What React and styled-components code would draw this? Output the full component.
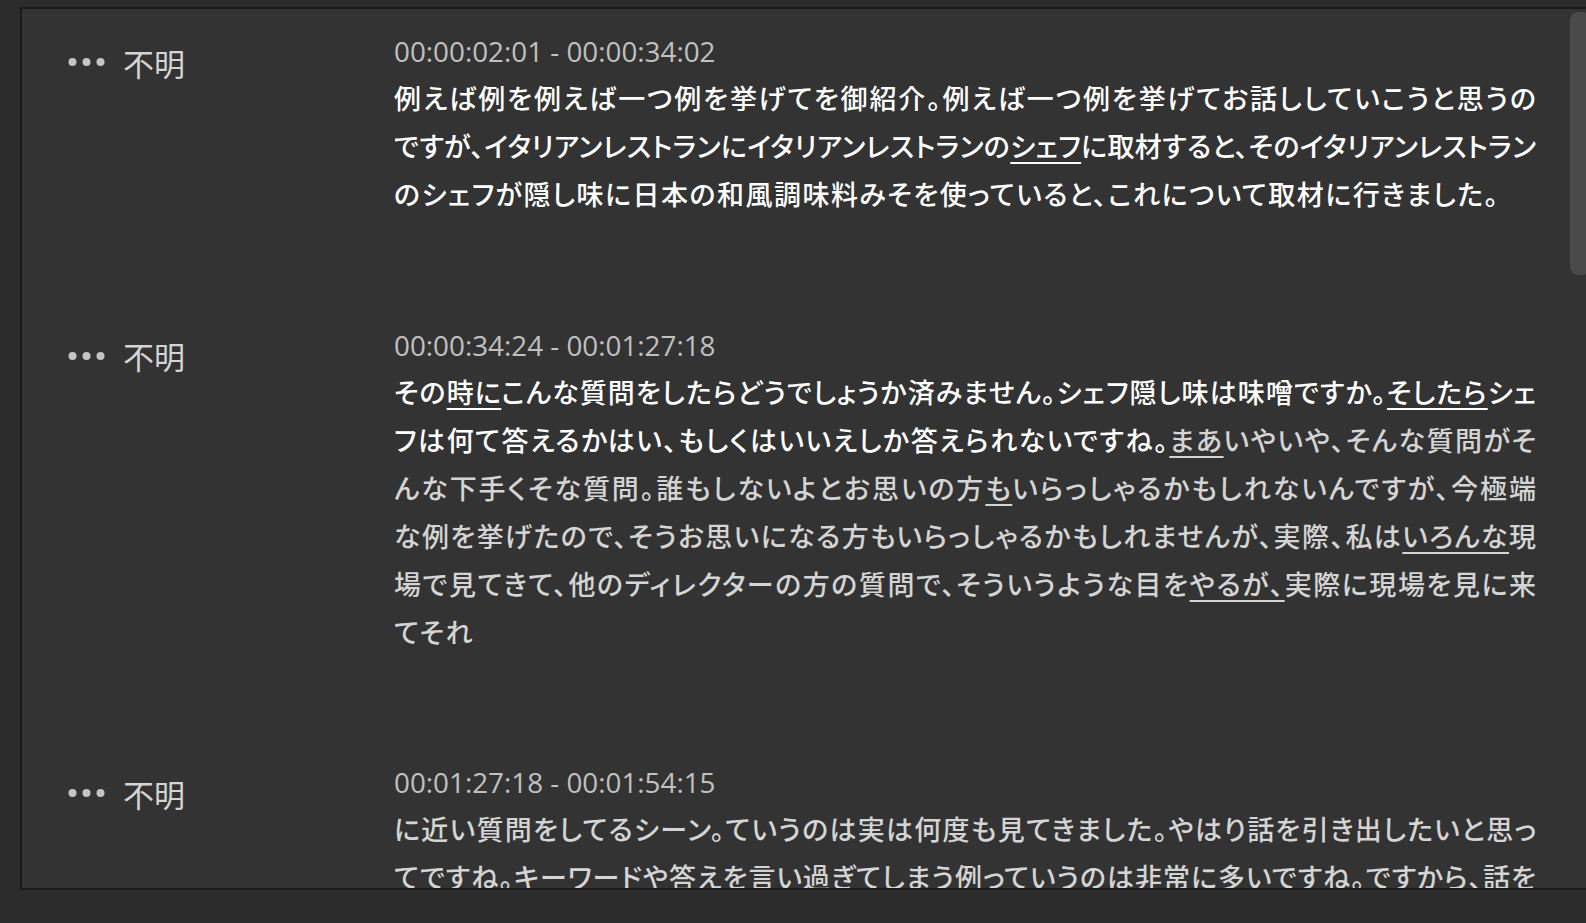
import React from "react";
import styled, { createGlobalStyle } from "styled-components";

const Global = createGlobalStyle`
  html, body { margin: 0; padding: 0; background: #2c2c2c; overflow: hidden; }
  #root { height: 923px; }
`;

const Page = styled.div`
  height: 923px;
  box-sizing: border-box;
  padding: 7px 0 33px 20px;
  background: #2c2c2c;
`;

const Panel = styled.div`
  position: relative;
  height: 100%;
  box-sizing: border-box;
  background: #333333;
  border: 2px solid #1a1a1a;
  border-right: none;
  overflow: hidden;
`;

const Thumb = styled.div`
  position: absolute;
  top: 3px;
  right: -4px;
  width: 20px;
  height: 263px;
  border-radius: 8px;
  background: #4a4a4a;
`;

const List = styled.div`
  display: flex;
  flex-direction: column;
`;

const Row = styled.div`
  display: grid;
  grid-template-columns: 372px 1142px;
  padding: 20px 0 84.5px;
`;

const Speaker = styled.div`
  display: flex;
  align-items: center;
  gap: 17px;
  padding-left: 46px;
  margin-top: 13px;
  height: 40px;
  color: #d4d4d4;
  font-family: "Noto Sans CJK JP", "Noto Sans", sans-serif;
  font-size: 31px;
`;

const Dots = styled.svg`
  width: 38px;
  height: 10px;
  flex: none;
`;

const Content = styled.div`
  display: flex;
  flex-direction: column;
`;

const Time = styled.div`
  font-family: "Open Sans", "Noto Sans", sans-serif;
  font-size: 27.8px;
  line-height: 45px;
  color: #c0c0c0;
`;

const Line = styled.div`
  font-family: "Noto Sans CJK JP", sans-serif;
  font-feature-settings: "palt";
  font-size: 27px;
  font-weight: 500;
  line-height: 48px;
  letter-spacing: ${(p) => (p.$full ? "0" : "1.5px")};
  text-align: ${(p) => (p.$full ? "justify" : "left")};
  text-align-last: ${(p) => (p.$full ? "justify" : "left")};
  text-justify: inter-character;
`;

const Seg = styled.span`
  color: ${(p) => (p.$hl ? "#ffffff" : "#d4d4d4")};
  text-decoration: ${(p) => (p.$u ? "underline" : "none")};
  text-decoration-thickness: 1.5px;
  text-underline-offset: 5px;
`;

const b = (t, u) => ({ t, hl: true, u });
const d = (t, u) => ({ t, hl: false, u });

const rows = [
  {
    time: "00:00:02:01 - 00:00:34:02",
    lines: [
      { full: true, parts: [b("例えば例を例えば一つ例を挙げてを御紹介。例えば一つ例を挙げてお話ししていこうと思うの")] },
      {
        full: true,
        parts: [
          b("ですが、イタリアンレストランにイタリアンレストランの"),
          b("シェフ", true),
          b("に取材すると、そのイタリアンレストラン"),
        ],
      },
      { full: false, parts: [b("のシェフが隠し味に日本の和風調味料みそを使っていると、これについて取材に行きました。")] },
    ],
  },
  {
    time: "00:00:34:24 - 00:01:27:18",
    lines: [
      {
        full: true,
        parts: [
          b("その"),
          b("時に", true),
          b("こんな質問をしたらどうでしょうか済みません。シェフ隠し味は味噌ですか。"),
          b("そしたら", true),
          b("シェ"),
        ],
      },
      {
        full: true,
        parts: [
          b("フは何て答えるかはい、もしくはいいえしか答えられないですね。"),
          d("まあ", true),
          d("いやいや、そんな質問がそ"),
        ],
      },
      {
        full: true,
        parts: [
          d("んな下手くそな質問。誰もしないよとお思いの方"),
          d("も", true),
          d("いらっしゃるかもしれないんですが、今極端"),
        ],
      },
      {
        full: true,
        parts: [
          d("な例を挙げたので、そうお思いになる方もいらっしゃるかもしれませんが、実際、私は"),
          d("いろんな", true),
          d("現"),
        ],
      },
      {
        full: true,
        parts: [
          d("場で見てきて、他のディレクターの方の質問で、そういうような目を"),
          d("やるが、", true),
          d("実際に現場を見に来"),
        ],
      },
      { full: false, parts: [d("てそれ")] },
    ],
  },
  {
    time: "00:01:27:18 - 00:01:54:15",
    lines: [
      { full: true, parts: [d("に近い質問をしてるシーン。ていうのは実は何度も見てきました。やはり話を引き出したいと思っ")] },
      { full: true, parts: [d("てですね。キーワードや答えを言い過ぎてしまう例っていうのは非常に多いですね。ですから、話を")] },
    ],
  },
];

function MoreDots() {
  return (
    <Dots viewBox="0 0 38 10">
      <circle cx="4.5" cy="5" r="4" fill="#c4c4c4" />
      <circle cx="18.5" cy="5" r="4" fill="#c4c4c4" />
      <circle cx="32.5" cy="5" r="4" fill="#c4c4c4" />
    </Dots>
  );
}

export default function App() {
  return (
    <>
      <Global />
      <Page>
        <Panel>
          <List>
            {rows.map((row, i) => (
              <Row key={i}>
                <div>
                  <Speaker>
                    <MoreDots />
                    <span>不明</span>
                  </Speaker>
                </div>
                <Content>
                  <Time>{row.time}</Time>
                  {row.lines.map((line, j) => (
                    <Line key={j} $full={line.full}>
                      {line.parts.map((p, k) => (
                        <Seg key={k} $hl={p.hl} $u={p.u}>
                          {p.t}
                        </Seg>
                      ))}
                    </Line>
                  ))}
                </Content>
              </Row>
            ))}
          </List>
          <Thumb />
        </Panel>
      </Page>
    </>
  );
}
